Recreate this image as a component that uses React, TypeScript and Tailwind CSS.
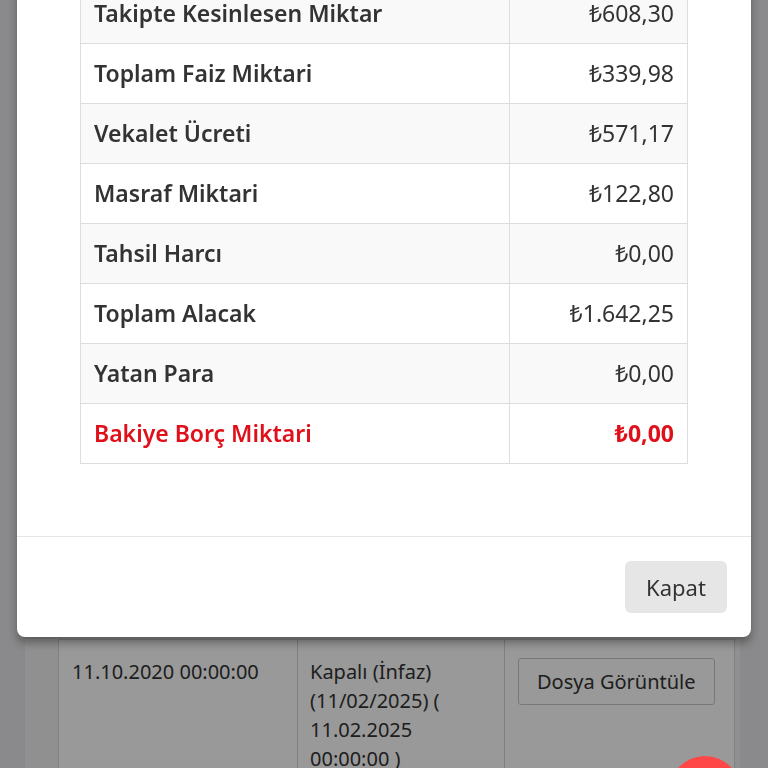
import React from 'react'

const rows = [
  { label: 'Takipte Kesinlesen Miktar', value: '₺608,30' },
  { label: 'Toplam Faiz Miktari', value: '₺339,98' },
  { label: 'Vekalet Ücreti', value: '₺571,17' },
  { label: 'Masraf Miktari', value: '₺122,80' },
  { label: 'Tahsil Harcı', value: '₺0,00' },
  { label: 'Toplam Alacak', value: '₺1.642,25' },
  { label: 'Yatan Para', value: '₺0,00' },
]

const font = { fontFamily: '"Noto Sans", "Open Sans", sans-serif' }

function BackgroundPage() {
  return (
    <div className="min-h-screen bg-[#e6e6e9] pl-[25px] pr-[28px] pt-[639px]" style={font}>
      <div className="bg-[#f1f1f1] pl-[33px] pr-[5px]">
        <table className="w-full border-collapse text-[20px] text-[#333]">
          <tbody>
            <tr className="bg-white align-top">
              <td className="w-[239px] border border-[#d6d6d6] px-[13px] pt-[17px] pb-4 leading-[29px]">
                11.10.2020 00:00:00
              </td>
              <td className="w-[207px] border border-[#d6d6d6] pl-[12px] pr-[13px] pt-[17px] pb-4 leading-[29px]">
                Kapalı (İnfaz) (11/02/2025) ( 11.02.2025 00:00:00 )
              </td>
              <td className="border border-[#d6d6d6] px-[13px] pt-[18px] pb-4">
                <button className="rounded-[3px] border border-[#c8c8c8] bg-white px-[18px] py-[9px] text-[20px] leading-[27px] text-[#333]">
                  Dosya Görüntüle
                </button>
              </td>
            </tr>
          </tbody>
        </table>
      </div>
    </div>
  )
}

function Modal() {
  return (
    <div className="fixed inset-0 flex flex-col justify-end bg-black/40 pb-[131px]" style={font}>
      <div className="mx-[17px] rounded-lg bg-white shadow-[0_6px_10px_rgba(0,0,0,0.35)]">
        <div className="px-[63px] pt-10 pb-[72px]">
          <table className="w-full border-collapse text-[#333]">
            <tbody>
              {rows.map((r, i) => (
                <tr key={r.label} className={i % 2 === 0 ? 'bg-[#f9f9f9]' : 'bg-white'}>
                  <td className="h-[60px] border border-[#dddddd] px-[13px] text-[23px] font-semibold">{r.label}</td>
                  <td className="w-[178px] border border-[#dddddd] px-[13px] text-right text-[23px]">{r.value}</td>
                </tr>
              ))}
              <tr className="bg-white text-[#e0101a]">
                <td className="h-[60px] border border-[#dddddd] px-[13px] text-[23px] font-semibold">Bakiye Borç Miktari</td>
                <td className="w-[178px] border border-[#dddddd] px-[13px] text-right text-[23px] font-bold">₺0,00</td>
              </tr>
            </tbody>
          </table>
        </div>
        <div className="flex justify-end border-t border-[#e5e5e5] px-6 pt-6 pb-6">
          <button className="h-[52px] w-[102px] rounded-md bg-[#e6e6e6] text-[22px] text-[#333]">Kapat</button>
        </div>
      </div>
    </div>
  )
}

export default function App() {
  return (
    <div className="relative">
      <BackgroundPage />
      <Modal />
      <div className="fixed left-[669px] top-[756px] h-[72px] w-[72px] rounded-full bg-[#ff4747]" />
    </div>
  )
}
